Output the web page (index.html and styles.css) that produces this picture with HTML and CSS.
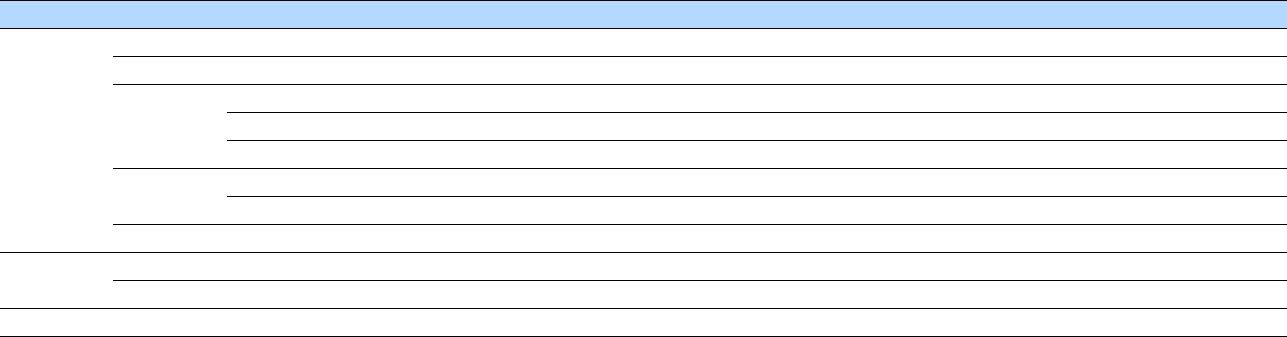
FILE: index.html
```html
<!DOCTYPE html>
<html>
<head>
<meta charset="utf-8">
<link rel="stylesheet" href="styles.css">
</head>
<body>
<table class="grid">
  <colgroup>
    <col class="col-a">
    <col class="col-b">
    <col class="col-c">
  </colgroup>
  <thead>
    <tr class="head"><th></th><th></th><th></th></tr>
  </thead>
  <tbody>
    <tr><td rowspan="8"></td><td></td><td></td></tr>
    <tr><td></td><td></td></tr>
    <tr><td rowspan="3"></td><td></td></tr>
    <tr><td></td></tr>
    <tr><td></td></tr>
    <tr><td rowspan="2"></td><td></td></tr>
    <tr><td></td></tr>
    <tr><td></td><td></td></tr>
    <tr><td rowspan="2"></td><td></td><td></td></tr>
    <tr><td></td><td></td></tr>
    <tr><td></td><td></td><td></td></tr>
  </tbody>
</table>
</body>
</html>
```

FILE: styles.css
```css
html, body {
  margin: 0;
  padding: 0;
  background: #ffffff;
  font-family: "Liberation Sans", Arial, sans-serif;
}

.grid {
  width: 1287px;
  border-collapse: collapse;
  table-layout: fixed;
  border-top: 1px solid #000;
}

.col-a { width: 113px; }
.col-b { width: 114px; }
.col-c { width: auto; }

.grid th,
.grid td {
  padding: 0;
  height: 27px;
  border-bottom: 1px solid #000;
}

.head th {
  background: #b3d9ff;
}
```
